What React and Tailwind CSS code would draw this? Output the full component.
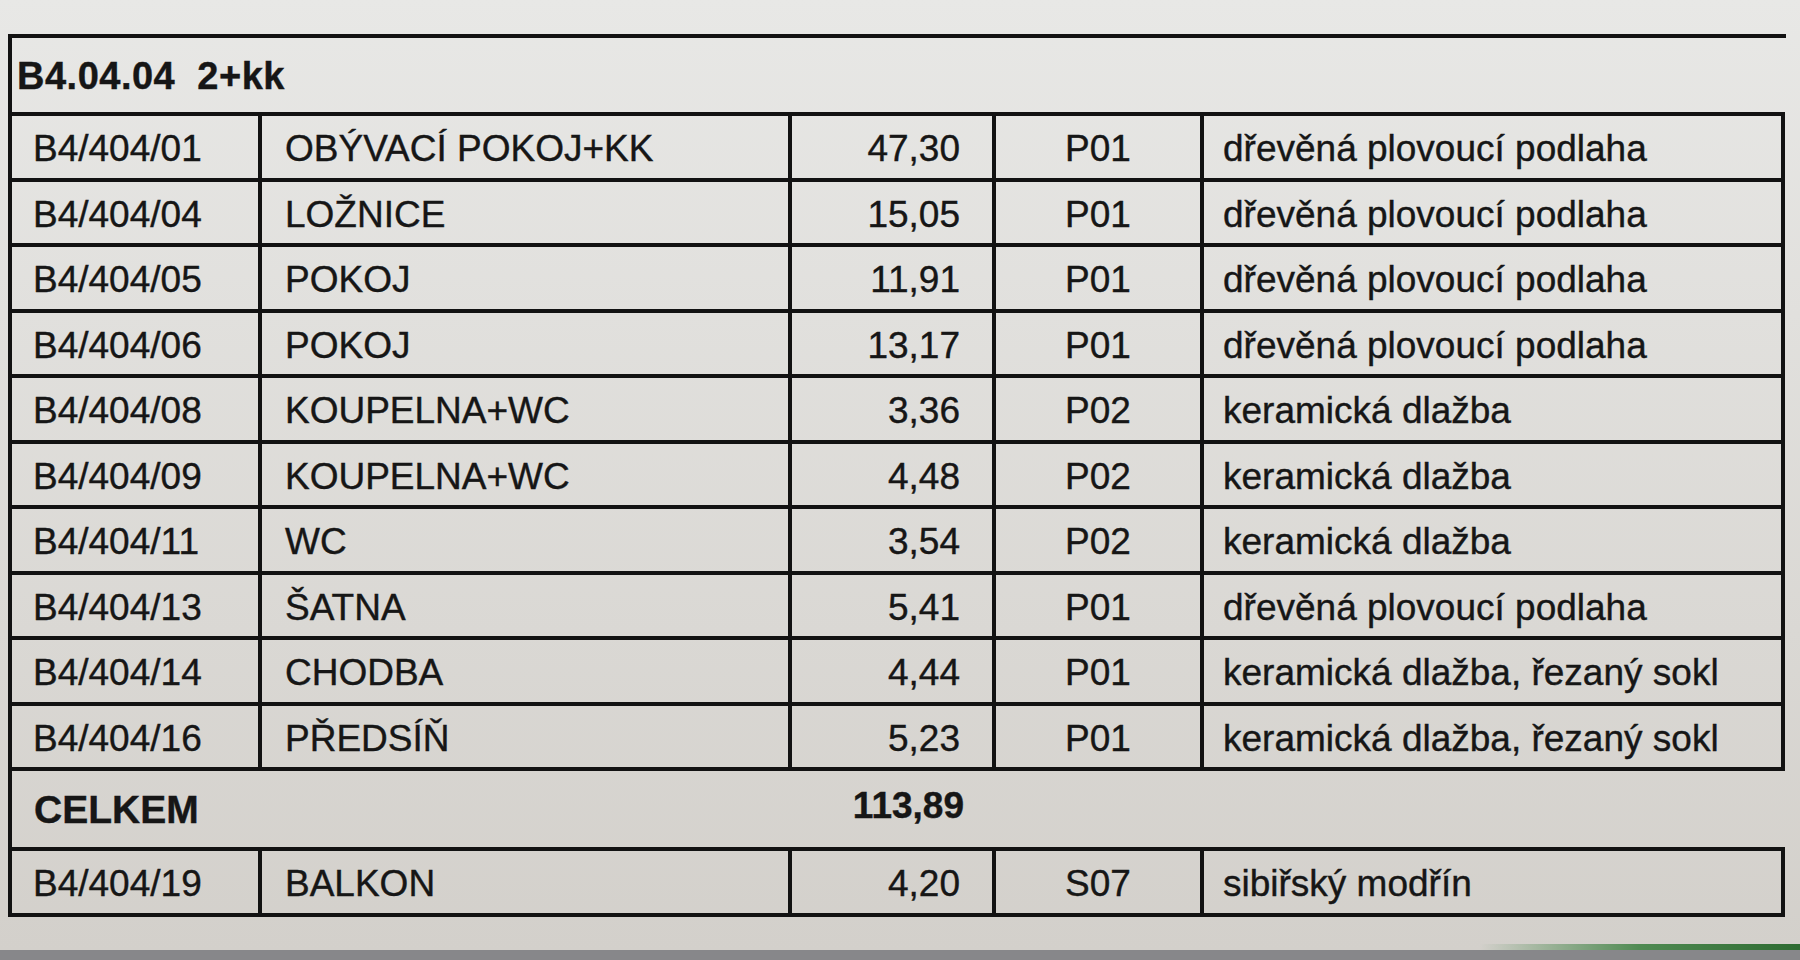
import React from 'react';

const rows = [
  ['B4/404/01', 'OBÝVACÍ POKOJ+KK', '47,30', 'P01', 'dřevěná plovoucí podlaha'],
  ['B4/404/04', 'LOŽNICE', '15,05', 'P01', 'dřevěná plovoucí podlaha'],
  ['B4/404/05', 'POKOJ', '11,91', 'P01', 'dřevěná plovoucí podlaha'],
  ['B4/404/06', 'POKOJ', '13,17', 'P01', 'dřevěná plovoucí podlaha'],
  ['B4/404/08', 'KOUPELNA+WC', '3,36', 'P02', 'keramická dlažba'],
  ['B4/404/09', 'KOUPELNA+WC', '4,48', 'P02', 'keramická dlažba'],
  ['B4/404/11', 'WC', '3,54', 'P02', 'keramická dlažba'],
  ['B4/404/13', 'ŠATNA', '5,41', 'P01', 'dřevěná plovoucí podlaha'],
  ['B4/404/14', 'CHODBA', '4,44', 'P01', 'keramická dlažba, řezaný sokl'],
  ['B4/404/16', 'PŘEDSÍŇ', '5,23', 'P01', 'keramická dlažba, řezaný sokl'],
];

const cols = 'grid grid-cols-[250px_530px_204px_208px_581px]';

const Row = ({ data }) => (
  <div className={`${cols} h-[65.5px] border-b-[4px] border-[#121212]`}>
    <div className="flex items-center pl-[21px] pt-[4px] border-r-[4px] border-[#121212]">{data[0]}</div>
    <div className="flex items-center pl-[23px] pt-[4px] border-r-[4px] border-[#121212]">{data[1]}</div>
    <div className="flex items-center justify-end pr-[32px] pt-[4px] border-r-[4px] border-[#121212]">{data[2]}</div>
    <div className="flex items-center justify-center pt-[4px] border-r-[4px] border-[#121212]">{data[3]}</div>
    <div className="flex items-center pl-[19px] pt-[4px] border-r-[4px] border-[#121212]">{data[4]}</div>
  </div>
);

export default function App() {
  return (
    <div className="w-[1800px] h-[960px] flex flex-col overflow-hidden font-['Liberation_Sans',Arial,sans-serif] text-[#161616] [-webkit-text-stroke:0.4px_#161616]">
      <div className="flex-1 flex flex-col bg-linear-to-b from-[#e8e8e6] to-[#d3d0cb]">
        <div className="pt-[34px] pl-[8px] text-[37px] leading-none">
          {/* title */}
          <div className="w-[1778px] h-[78px] border-t-[4px] border-l-[4px] border-[#121212] flex items-center pl-[5px] pt-[2px]">
            <span className="whitespace-pre font-bold text-[38px] tracking-[0.5px]">B4.04.04  2+kk</span>
          </div>

          {/* rooms */}
          <div className="w-[1777px] border-l-[4px] border-t-[4px] border-[#121212]">
            {rows.map((r) => (
              <Row key={r[0]} data={r} />
            ))}
          </div>

          {/* total */}
          <div className={`${cols} w-[1777px] h-[76px] border-l-[4px] border-[#121212] font-bold`}>
            <div className="flex items-center pl-[22px] text-[39px]">CELKEM</div>
            <div />
            <div className="flex items-center justify-end pr-[32px] pb-[8px] text-[37px]">113,89</div>
            <div />
            <div />
          </div>

          {/* balcony */}
          <div className="w-[1777px] border-l-[4px] border-t-[4px] border-[#121212]">
            <Row data={['B4/404/19', 'BALKON', '4,20', 'S07', 'sibiřský modřín']} />
          </div>
        </div>

        <div className="mt-auto flex justify-end">
          <div className="w-[320px] h-[6px] bg-linear-to-r from-transparent via-[#4f8a52] to-[#2e6b32]" />
        </div>
      </div>
      <div className="h-[10px] bg-[#87878a]" />
    </div>
  );
}
